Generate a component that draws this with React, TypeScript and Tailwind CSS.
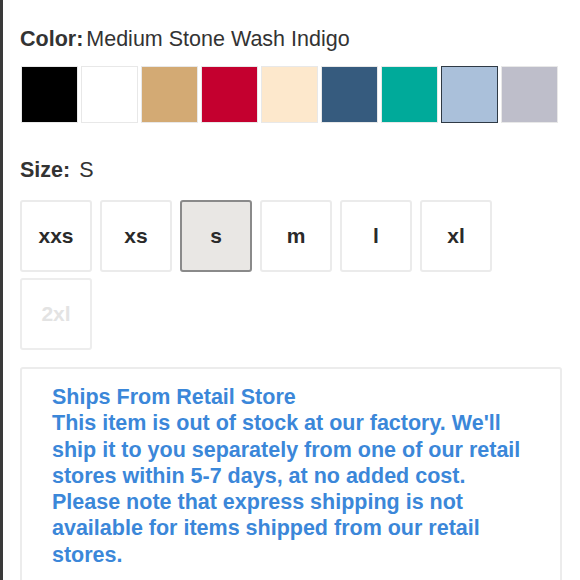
import React from 'react';

const SWATCHES = [
  { name: 'Black', hex: '#000000' },
  { name: 'White', hex: '#ffffff' },
  { name: 'Tan', hex: '#d3aa74' },
  { name: 'Red', hex: '#c4002f' },
  { name: 'Cream', hex: '#fde8cc' },
  { name: 'Navy', hex: '#365b7e' },
  { name: 'Teal', hex: '#00aa9a' },
  { name: 'Medium Stone Wash Indigo', hex: '#aac0da' },
  { name: 'Gray', hex: '#bebeca' },
];

const SIZES = [
  { id: 'xxs', disabled: false },
  { id: 'xs', disabled: false },
  { id: 's', disabled: false },
  { id: 'm', disabled: false },
  { id: 'l', disabled: false },
  { id: 'xl', disabled: false },
  { id: '2xl', disabled: true },
];

export default function App() {
  const [color, setColor] = React.useState('Medium Stone Wash Indigo');
  const [size, setSize] = React.useState('s');

  return (
    <div className="min-h-[580px] w-[580px] overflow-hidden bg-white border-l-[3px] border-[#3a3a3a] font-['Liberation_Sans',Arial,sans-serif] text-[#333]">
      <div className="pl-[17px] pr-[19px] pt-[26px]">
        {/* Color */}
        <div className="flex items-baseline gap-[3px] text-[21.5px] leading-[26px]">
          <span className="font-bold">Color:</span>
          <span>{color}</span>
        </div>
        <div className="mt-[14px] flex gap-[3.5px] pl-[1px]">
          {SWATCHES.map((s) => (
            <button
              key={s.name}
              onClick={() => setColor(s.name)}
              className={`h-[57px] w-[56.5px] shrink-0 border-[1.5px] ${
                color === s.name ? 'border-[#2f3a45]' : 'border-[#e8e8e8]'
              }`}
              style={{ backgroundColor: s.hex }}
            />
          ))}
        </div>

        {/* Size */}
        <div className="mt-[34px] flex items-baseline gap-[9px] text-[21.5px] leading-[26px]">
          <span className="font-bold">Size:</span>
          <span>{size.toUpperCase()}</span>
        </div>
        <div className="mt-[17px] flex w-[480px] flex-wrap gap-x-[8px] gap-y-[6px]">
          {SIZES.map((s) => (
            <button
              key={s.id}
              disabled={s.disabled}
              onClick={() => setSize(s.id)}
              className={`flex h-[72px] w-[72px] items-center justify-center rounded-[3px] border-2 text-[21px] font-bold ${
                size === s.id
                  ? 'border-[#8a8a8a] bg-[#e9e7e4] text-[#2a2a2a]'
                  : s.disabled
                  ? 'border-[#ededed] bg-white text-[#e3e3e3]'
                  : 'border-[#ebebeb] bg-white text-[#2a2a2a]'
              }`}
            >
              {s.id}
            </button>
          ))}
        </div>

        {/* Retail notice */}
        <div className="mt-[17px] w-[542px] rounded-[3px] border-2 border-[#ececec] pb-[20px] pl-[30px] pr-[20px] pt-[15px] text-[21.5px] font-bold leading-[26.3px] text-[#3b87d9]">
          <p>Ships From Retail Store</p>
          <p className="w-[485px]">
            This item is out of stock at our factory. We'll ship it to you separately from one of our retail
            stores within 5-7 days, at no added cost. Please note that express shipping is not available for
            items shipped from our retail stores.
          </p>
        </div>
      </div>
    </div>
  );
}
